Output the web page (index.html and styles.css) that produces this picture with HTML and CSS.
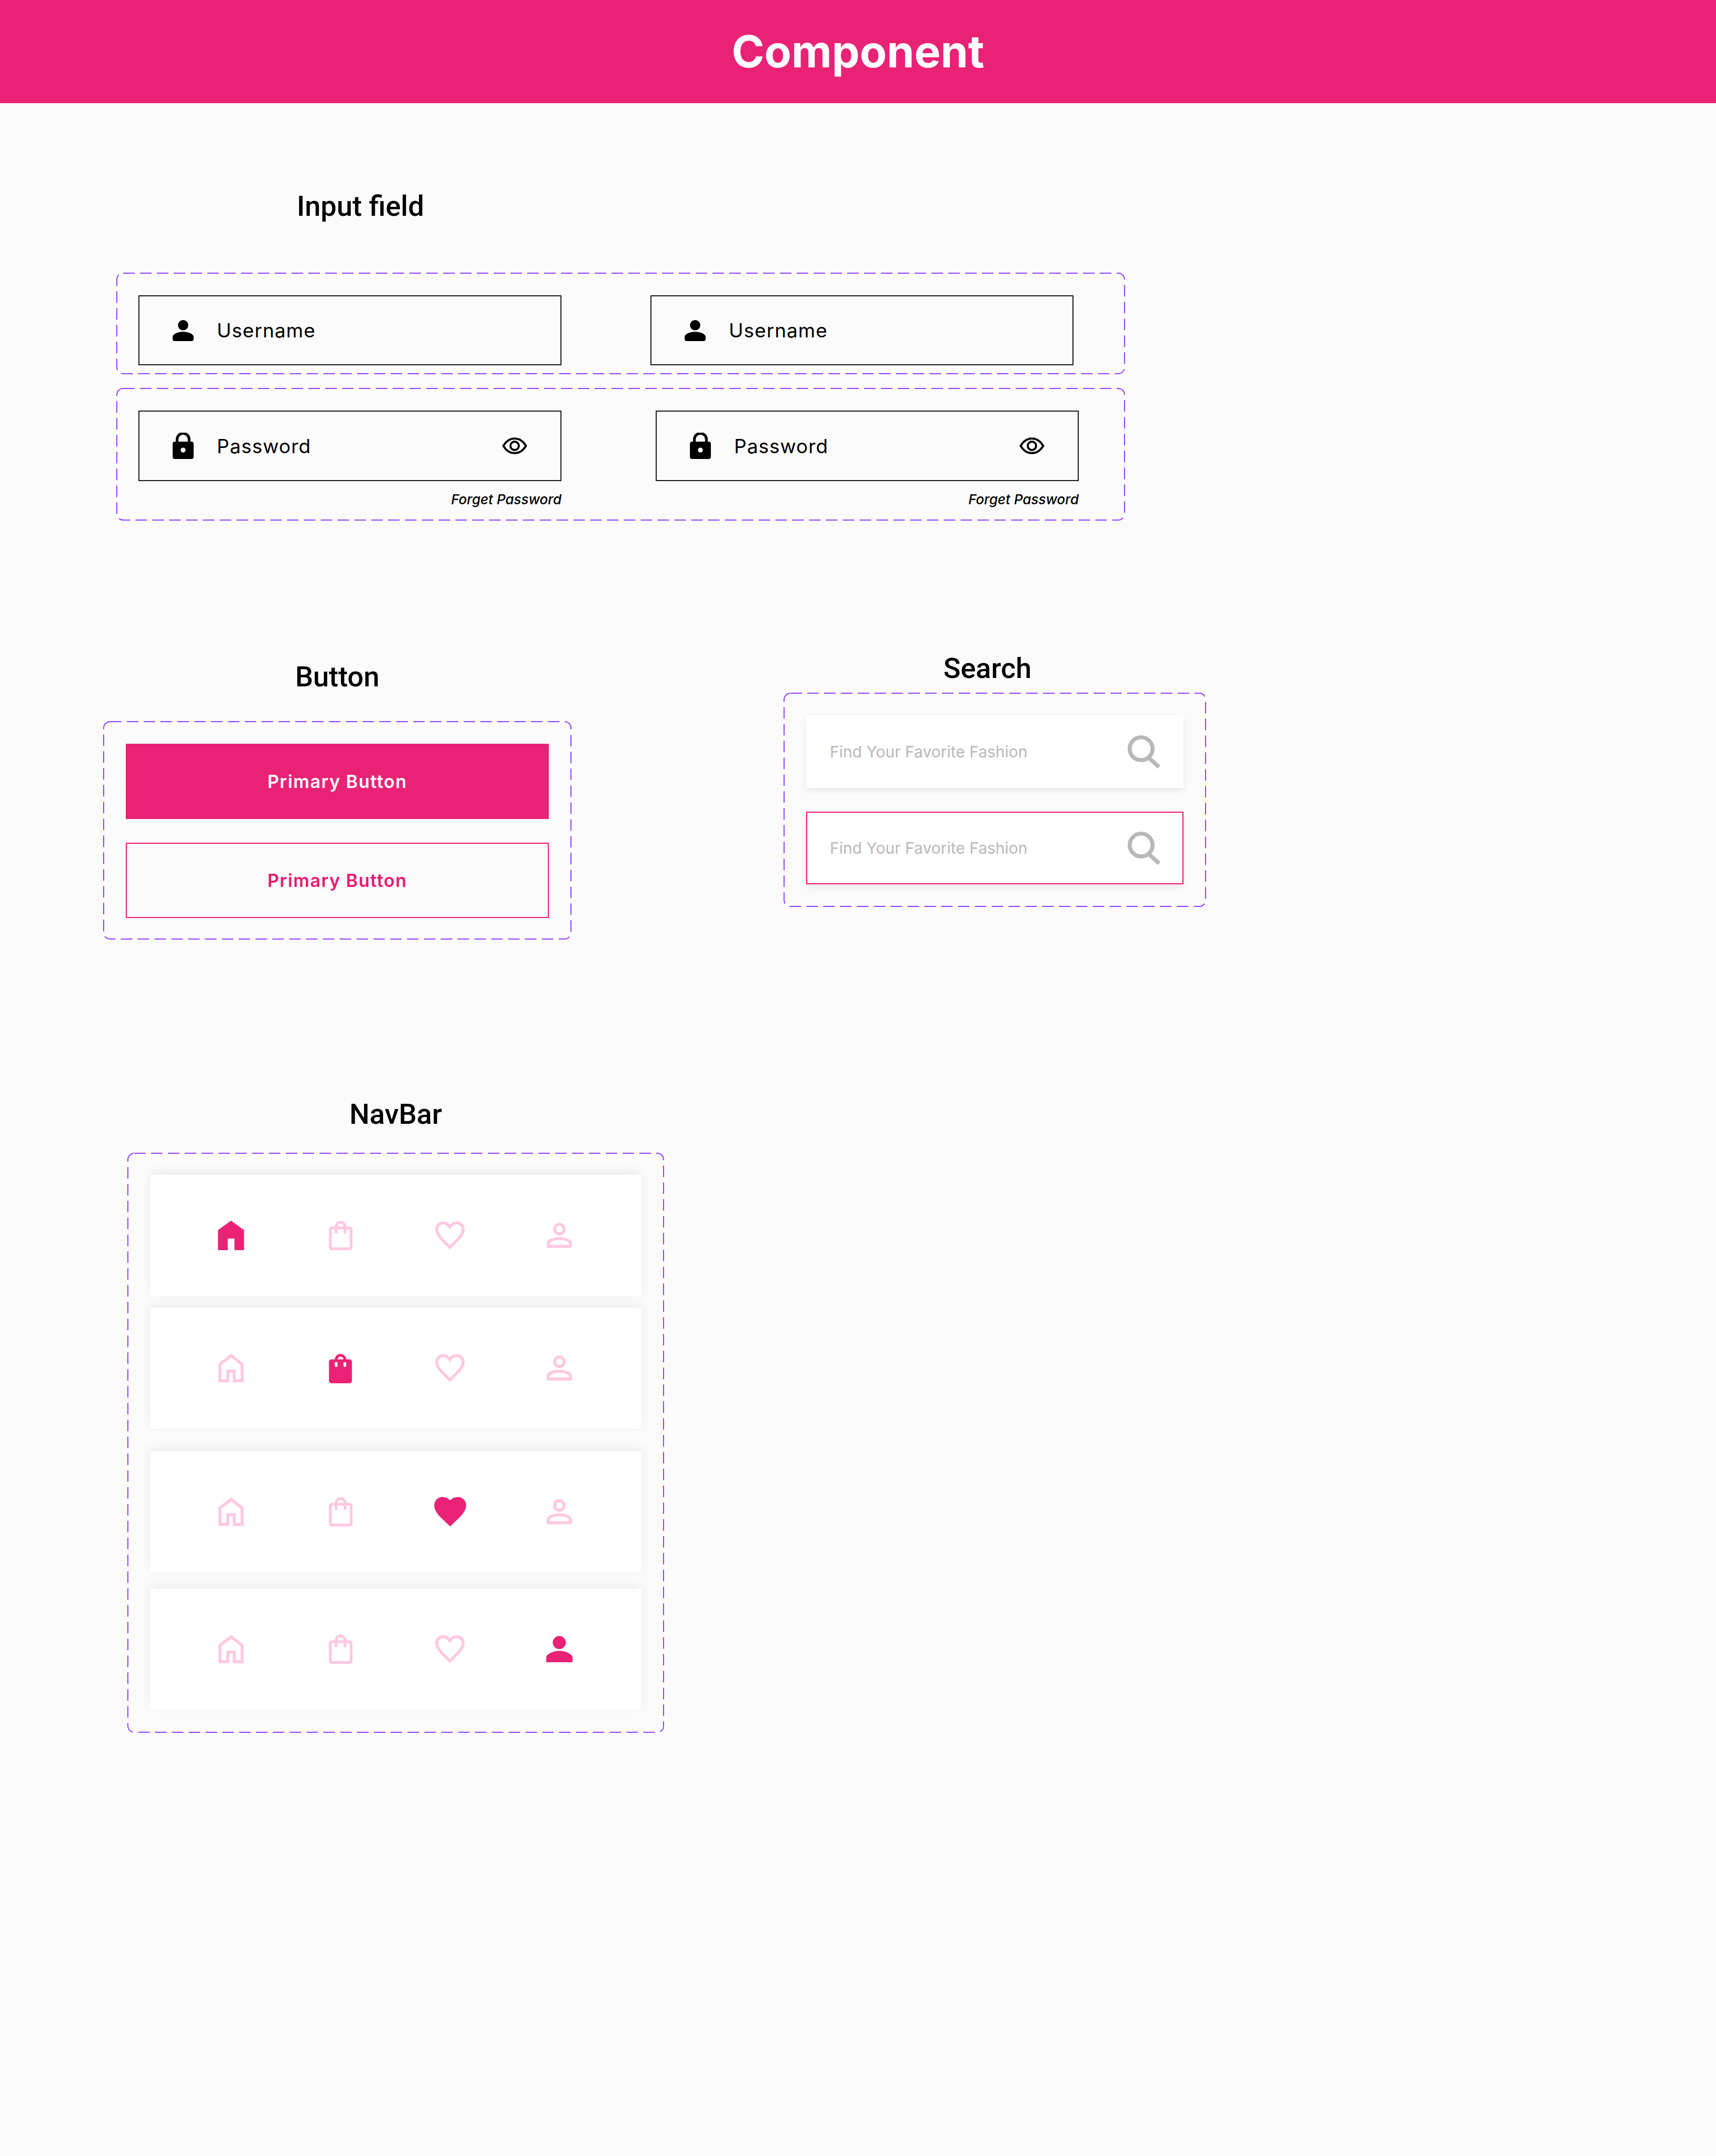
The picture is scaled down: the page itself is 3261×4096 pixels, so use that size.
FILE: index.html
```html
<!DOCTYPE html>
<html lang="en">
<head>
    <meta charset="UTF-8">
    <meta name="viewport" content="width=device-width, initial-scale=1.0">
    <title>Component</title>
    <link rel="stylesheet" href="styles.css">
</head>
<body>

<svg class="icon-defs" aria-hidden="true">
    <symbol id="i-user" viewBox="0 0 47 47">
        <circle cx="23.5" cy="11.5" r="11.5" fill="currentColor"/>
        <path d="M0 38C0 31 12 26 23.5 26S47 31 47 38V42Q47 47 42 47H5Q0 47 0 42Z" fill="currentColor"/>
    </symbol>
    <symbol id="i-lock" viewBox="0 0 47 59">
        <path d="M10 22V15A13.500 13.500 0 0 1 37 15V22" fill="none" stroke="currentColor" stroke-width="6"/>
        <path d="M5 20H42Q47 20 47 25V54Q47 59 42 59H5Q0 59 0 54V25Q0 20 5 20Z" fill="currentColor"/>
        <circle cx="23.500" cy="39" r="5.500" fill="#fbfbfb"/>
    </symbol>
    <symbol id="i-eye" viewBox="0 0 56 38">
        <path d="M2.500 19C9 8 18 2.500 28 2.500S47 8 53.500 19C47 30 38 35.500 28 35.500S9 30 2.500 19Z" fill="none" stroke="currentColor" stroke-width="4.500"/>
        <circle cx="28" cy="19" r="9.500" fill="none" stroke="currentColor" stroke-width="4.500"/>
    </symbol>
    <symbol id="i-search" viewBox="0 0 74 75">
        <circle cx="30" cy="31" r="25.500" fill="none" stroke="currentColor" stroke-width="9"/>
        <path d="M47 51L70 72" fill="none" stroke="currentColor" stroke-width="9"/>
    </symbol>

    <symbol id="i-home" viewBox="0 0 169 191">
        <path d="M10 70L85 13L159 70V181H106V116H63V181H10Z" fill="none" stroke="currentColor" stroke-width="20"/>
    </symbol>
    <symbol id="i-home-on" viewBox="0 0 176 199">
        <path d="M0 64L88 0L176 64V199H111V121H66V199H0Z" fill="currentColor"/>
    </symbol>
    <symbol id="i-bag" viewBox="0 0 160 199">
        <rect x="9.500" y="49.500" width="141" height="140" rx="10" fill="none" stroke="currentColor" stroke-width="19"/>
        <path d="M49 78V40A30 30 0 0 1 109 40V78" fill="none" stroke="currentColor" stroke-width="19" stroke-linecap="round"/>
    </symbol>
    <symbol id="i-bag-on" viewBox="0 0 153 200">
        <rect y="40" width="153" height="160" rx="16" fill="currentColor"/>
        <path d="M48 42A29 29 0 0 1 106 42" fill="none" stroke="currentColor" stroke-width="18"/>
        <path d="M39 60H57V82A9 9 0 0 1 39 82ZM97 60H115V82A9 9 0 0 1 97 82Z" fill="#fff"/>
    </symbol>
    <symbol id="i-heart" viewBox="0 0 200 190">
        <path d="M100 38C88 20 72 10 55 10C29 10 10 29 10 55C10 95 60 135 100 176C140 135 190 95 190 55C190 29 171 10 145 10C128 10 112 20 100 38Z" fill="none" stroke="currentColor" stroke-width="20"/>
    </symbol>
    <symbol id="i-heart-on" viewBox="0 0 215 199">
        <path d="M107 22C92 8 75 0 55 0C24 0 0 24 0 57C0 110 60 150 107 199C155 150 215 110 215 57C215 24 191 0 160 0C140 0 122 8 107 22Z" fill="currentColor"/>
    </symbol>
    <symbol id="i-person" viewBox="0 0 170 168">
        <circle cx="85" cy="42" r="32" fill="none" stroke="currentColor" stroke-width="20"/>
        <path d="M10 158V137C10 118 50 105 85 105S160 118 160 137V158Z" fill="none" stroke="currentColor" stroke-width="20"/>
    </symbol>
    <symbol id="i-person-on" viewBox="0 0 177 177">
        <circle cx="88" cy="44" r="44" fill="currentColor"/>
        <path d="M0 177V146C0 120 50 100 88 100S177 120 177 146V177Z" fill="currentColor"/>
    </symbol>
</svg>

<header class="page-header">Component</header>

<!-- Input fields -->
<section class="input-section">
    <h2 class="heading heading-input">Input field</h2>

    <div class="dashed-box user-box">
        <svg class="dash"><rect/></svg>
        <div class="field field-user">
            <svg class="ico-user"><use href="#i-user"/></svg>
            <span class="field-text">Username</span>
        </div>
        <div class="field field-user">
            <svg class="ico-user"><use href="#i-user"/></svg>
            <span class="field-text">Username</span>
        </div>
    </div>

    <div class="dashed-box pass-box">
        <svg class="dash"><rect/></svg>
        <div class="pass-col">
            <div class="field">
                <svg class="ico-lock"><use href="#i-lock"/></svg>
                <span class="field-text">Password</span>
                <svg class="ico-eye"><use href="#i-eye"/></svg>
            </div>
            <div class="forget">Forget Password</div>
        </div>
        <div class="pass-col">
            <div class="field">
                <svg class="ico-lock"><use href="#i-lock"/></svg>
                <span class="field-text">Password</span>
                <svg class="ico-eye"><use href="#i-eye"/></svg>
            </div>
            <div class="forget">Forget Password</div>
        </div>
    </div>
</section>

<div class="middle-row">
    <!-- Buttons -->
    <section class="button-section">
        <h2 class="heading">Button</h2>
        <div class="dashed-box button-box">
            <svg class="dash"><rect/></svg>
            <a href="#" class="btn btn-solid">Primary Button</a>
            <a href="#" class="btn btn-outline">Primary Button</a>
        </div>
    </section>

    <!-- Search -->
    <section class="search-section">
        <h2 class="heading heading-search">Search</h2>
        <div class="dashed-box search-box">
            <svg class="dash"><rect/></svg>
            <div class="search">
                <span>Find Your Favorite Fashion</span>
                <svg class="ico-search"><use href="#i-search"/></svg>
            </div>
            <div class="search search-active">
                <span>Find Your Favorite Fashion</span>
                <svg class="ico-search"><use href="#i-search"/></svg>
            </div>
        </div>
    </section>
</div>

<!-- NavBar -->
<section class="nav-section">
    <h2 class="heading">NavBar</h2>
    <div class="dashed-box nav-box">
        <svg class="dash"><rect/></svg>

        <div class="nav-card">
            <svg class="on ico-home-on"><use href="#i-home-on"/></svg>
            <svg class="off ico-bag"><use href="#i-bag"/></svg>
            <svg class="off ico-heart"><use href="#i-heart"/></svg>
            <svg class="off ico-person"><use href="#i-person"/></svg>
        </div>
        <div class="nav-card">
            <svg class="off ico-home"><use href="#i-home"/></svg>
            <svg class="on ico-bag-on"><use href="#i-bag-on"/></svg>
            <svg class="off ico-heart"><use href="#i-heart"/></svg>
            <svg class="off ico-person"><use href="#i-person"/></svg>
        </div>
        <div class="nav-card">
            <svg class="off ico-home"><use href="#i-home"/></svg>
            <svg class="off ico-bag"><use href="#i-bag"/></svg>
            <svg class="on ico-heart-on"><use href="#i-heart-on"/></svg>
            <svg class="off ico-person"><use href="#i-person"/></svg>
        </div>
        <div class="nav-card">
            <svg class="off ico-home"><use href="#i-home"/></svg>
            <svg class="off ico-bag"><use href="#i-bag"/></svg>
            <svg class="off ico-heart"><use href="#i-heart"/></svg>
            <svg class="on ico-person-on"><use href="#i-person-on"/></svg>
        </div>
    </div>
</section>

</body>
</html>
```

FILE: styles.css
```css
* {
    box-sizing: border-box;
}
body {
    font-family: Inter, "Liberation Sans", sans-serif;
    background-color: #fbfbfb;
    color: #000000;
    margin: 0;
    min-height: 100vh;
    overflow: hidden;
}
.icon-defs {
    position: absolute;
    width: 0;
    height: 0;
}
.page-header {
    height: 196px;
    background-color: #ea2275;
    color: #ffffff;
    font-size: 84px;
    font-weight: 700;
    line-height: 196px;
    text-align: center;
}
.heading {
    margin: 0;
    font-family: Roboto, sans-serif;
    font-size: 54px;
    font-weight: 500;
    line-height: 64px;
    text-align: center;
}

/* dashed frame drawn as svg so the dash length can match */
.dashed-box {
    position: relative;
}
.dash {
    position: absolute;
    top: 0;
    left: 0;
    width: 100%;
    height: 100%;
    pointer-events: none;
}
.dash rect {
    x: 1px;
    y: 1px;
    width: calc(100% - 2px);
    height: calc(100% - 2px);
    rx: 12px;
    fill: none;
    stroke: #9040ff;
    stroke-width: 2;
    stroke-dasharray: 22 10;
}

/* input fields */
.input-section {
    margin: 164px 0 0 221px;
    width: 1917px;
}
.heading-input {
    margin: 0 0 94px 343px;
    text-align: left;
}
.user-box {
    display: flex;
    gap: 169px;
    height: 193px;
    padding: 43px 0 0 42px;
}
.pass-box {
    display: flex;
    gap: 179px;
    height: 252px;
    margin-top: 26px;
    padding: 43px 0 0 42px;
}
.pass-col {
    width: 804px;
}
.field {
    display: flex;
    align-items: center;
    width: 804px;
    height: 134px;
    padding: 0 63px;
    border: 2px solid #1a1a1a;
}
.field-user {
    height: 133px;
}
.field-text {
    margin-left: 44px;
    font-size: 37px;
    letter-spacing: 1px;
}
.ico-user {
    width: 40px;
    height: 40px;
}
.ico-lock {
    width: 40px;
    height: 50px;
}
.ico-eye {
    width: 48px;
    height: 32px;
    margin-left: auto;
}
.forget {
    margin-top: 15px;
    font-size: 26px;
    font-style: italic;
    font-weight: 500;
    line-height: 40px;
    text-align: right;
}

/* buttons and search */
.middle-row {
    display: flex;
    align-items: flex-start;
    gap: 403px;
    margin: 249px 0 0 196px;
}
.button-section {
    width: 890px;
    padding-top: 16px;
}
.button-box {
    display: flex;
    flex-direction: column;
    gap: 45px;
    height: 415px;
    margin-top: 52px;
    padding: 43px;
}
.btn {
    display: block;
    height: 143px;
    font-size: 34px;
    font-weight: 600;
    letter-spacing: 1.5px;
    line-height: 139px;
    text-align: center;
    text-decoration: none;
}
.btn-solid {
    background-color: #ea2275;
    border: 2px solid #ea2275;
    color: #ffffff;
}
.btn-outline {
    border: 2px solid #ee1a70;
    color: #ea1a70;
}
.search-section {
    width: 803px;
}
.heading-search {
    margin-right: 28px;
}
.search-box {
    display: flex;
    flex-direction: column;
    gap: 45px;
    height: 407px;
    margin-top: 14px;
    padding: 43px;
}
.search {
    display: flex;
    align-items: center;
    justify-content: space-between;
    height: 139px;
    padding: 0 43px 0 45px;
    background-color: #ffffff;
    box-shadow: 0 6px 12px rgba(0,0,0,0.07);
    color: #b8b8b8;
    font-size: 30px;
}
.search-active {
    border: 2px solid #f0146f;
    padding: 0 41px 0 43px;
}
.ico-search {
    width: 63px;
    height: 64px;
}

/* navbar */
.nav-section {
    margin: 300px 0 0 242px;
    width: 1020px;
}
.nav-box {
    height: 1102px;
    margin-top: 41px;
    padding: 42px 43px;
}
.nav-card {
    display: grid;
    grid-template-columns: repeat(4, 208px);
    justify-items: center;
    align-items: center;
    height: 230px;
    padding-left: 50px;
    background-color: #ffffff;
    box-shadow: 0 -6px 20px rgba(0,0,0,0.06);
}
.nav-card:nth-of-type(2) {
    margin-top: 22px;
}
.nav-card:nth-of-type(3) {
    margin-top: 43px;
}
.nav-card:nth-of-type(4) {
    margin-top: 31px;
}
.on {
    color: #ea2275;
}
.off {
    color: #ffc8e1;
}
.ico-home {
    width: 48px;
    height: 54px;
}
.ico-home-on {
    width: 50px;
    height: 56px;
}
.ico-bag {
    width: 45px;
    height: 56px;
}
.ico-bag-on {
    width: 44px;
    height: 57px;
}
.ico-heart {
    width: 56px;
    height: 54px;
}
.ico-heart-on {
    width: 61px;
    height: 56px;
}
.ico-person {
    width: 48px;
    height: 48px;
}
.ico-person-on {
    width: 50px;
    height: 50px;
}
```
